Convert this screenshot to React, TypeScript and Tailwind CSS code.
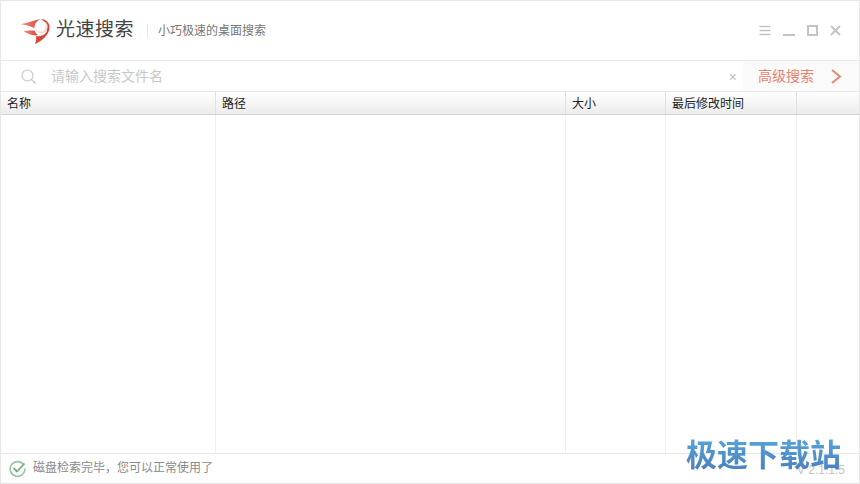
const cjk = "font-['Liberation_Sans','Noto_Sans_CJK_SC',sans-serif]";

const columns = [
  { label: "名称", width: "w-[215px]" },
  { label: "路径", width: "w-[350px]" },
  { label: "大小", width: "w-[100px]" },
  { label: "最后修改时间", width: "w-[131px]" },
];

function Logo() {
  return (
    <svg width="32" height="28" viewBox="0 0 32 28" className="shrink-0">
      <defs>
        <linearGradient id="tail" x1="0" y1="0" x2="1" y2="0">
          <stop offset="0" stopColor="#f0907f" />
          <stop offset="1" stopColor="#dc4238" />
        </linearGradient>
        <radialGradient id="ball" cx="0.42" cy="0.42" r="0.6">
          <stop offset="0.6" stopColor="#ffffff" />
          <stop offset="1" stopColor="#f6c4bc" />
        </radialGradient>
      </defs>
      <path d="M0.7 7.3 C8 6 15 3 21 2 C16 4 14.5 7 14.5 11 C10 9 5 8 0.7 7.3 Z" fill="url(#tail)" />
      <path d="M3.5 14 C7 13.5 11 13.5 14.5 13.5 C15.5 16 16.5 17 18 18 C13 19.5 8 17 3.5 14 Z" fill="url(#tail)" />
      <path d="M21 2 C26 2 30 6 29.5 11 C29 18 22 24 15 27 C16 24 16.5 21 16 19 C19 20 24 19 26.5 15 C28 11 27 6 21 2 Z" fill="#dc4238" />
      <circle cx="21.5" cy="10" r="6.2" fill="url(#ball)" />
    </svg>
  );
}

function WindowButtons() {
  return (
    <div className="flex items-center gap-[12px] text-[#c4c4c4]">
      <svg width="12" height="11" viewBox="0 0 12 11" fill="none" stroke="currentColor" strokeWidth="1.6">
        <path d="M0.5 1.5H11.5M0.5 5.5H11.5M0.5 9.5H11.5" />
      </svg>
      <svg width="12" height="11" viewBox="0 0 12 11" fill="none" stroke="currentColor" strokeWidth="2">
        <path d="M0 10H12" />
      </svg>
      <svg width="11" height="11" viewBox="0 0 11 11" fill="none" stroke="currentColor" strokeWidth="2">
        <rect x="1" y="1" width="9" height="9" />
      </svg>
      <svg width="11" height="11" viewBox="0 0 11 11" fill="none" stroke="currentColor" strokeWidth="2">
        <path d="M1 1L10 10M10 1L1 10" />
      </svg>
    </div>
  );
}

export default function App() {
  return (
    <div className={`relative flex h-[484px] w-[860px] flex-col overflow-hidden border border-[#e6e6e6] bg-white ${cjk}`}>
      <div className="flex h-[60px] shrink-0 items-center justify-between border-b border-[#e8e8e8] pl-[19px] pr-[18px]">
        <div className="flex items-center">
          <Logo />
          <span className="ml-[4px] text-[19px] tracking-[0.5px] text-[#444444]">光速搜索</span>
          <div className="ml-[13px] h-[14px] w-px bg-[#e4e4e4]" />
          <span className="ml-[10px] text-[12px] text-[#777777]">小巧极速的桌面搜索</span>
        </div>
        <WindowButtons />
      </div>

      <div className="flex h-[31px] shrink-0 items-stretch border-b border-[#e8e8e8]">
        <div className="flex flex-1 items-center pl-[20px] pr-[6px]">
          <svg width="15" height="15" viewBox="0 0 15 15" fill="none" stroke="#c8c8c8" strokeWidth="1.2">
            <circle cx="6.5" cy="6.5" r="5.5" />
            <path d="M10.5 10.5L14.5 14.5" />
          </svg>
          <span className="ml-[15px] flex-1 text-[14px] text-[#c8c8c8]">请输入搜索文件名</span>
          <span className="pt-px text-[14px] leading-none text-[#bdbdbd]">×</span>
        </div>
        <div className="flex w-[116px] items-center bg-[#fafafa] pl-[15px]">
          <span className="text-[14px] text-[#e5826f]">高级搜索</span>
          <svg width="12" height="15" viewBox="0 0 12 15" fill="none" stroke="#e9866f" strokeWidth="2" className="ml-[16px]">
            <path d="M2 1L10 7.5L2 14" />
          </svg>
        </div>
      </div>

      <div className="flex h-[23px] shrink-0 border-b border-[#d4d4d4] bg-gradient-to-b from-white to-[#ececec]">
        {columns.map((col) => (
          <div key={col.label} className={`${col.width} flex items-center border-r border-[#e0e0e0] pl-[6px] pt-px text-[12px] text-[#222222]`}>
            {col.label}
          </div>
        ))}
      </div>

      <div className="flex flex-1">
        {columns.map((col) => (
          <div key={col.label} className={`${col.width} border-r border-[#f0f0f0]`} />
        ))}
      </div>

      <div className="flex h-[30px] shrink-0 items-center border-t border-[#e8e8e8] pb-px pl-[8px]">
        <svg width="17" height="17" viewBox="0 0 17 17" fill="none" strokeWidth="1.7" className="shrink-0">
          <path d="M14.5 4.5 A7.4 7.4 0 1 0 16 8.5" stroke="#9cc6a0" />
          <path d="M4.5 8 L8 11.5 L15.5 3.5" stroke="#6fb376" strokeWidth="1.8" />
        </svg>
        <span className="ml-[7px] text-[12px] text-[#8a8a8a]">磁盘检索完毕，您可以正常使用了</span>
      </div>

      <span className="absolute right-[14px] top-[460px] text-[12px] text-[#c4c4c4]">V 2.1.1.5</span>
      <span className="absolute left-[685px] top-[432px] bg-gradient-to-b from-[#58a9e0] to-[#4876b4] bg-clip-text text-[31px] font-bold text-transparent">
        极速下载站
      </span>
    </div>
  );
}
